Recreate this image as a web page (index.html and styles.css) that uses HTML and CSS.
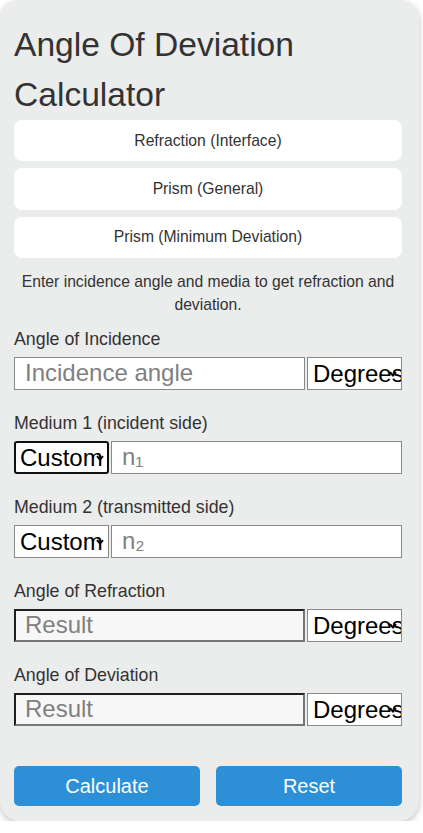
FILE: index.html
```html
<!DOCTYPE html>
<html lang="en">
<head>
<meta charset="utf-8">
<title>Angle Of Deviation Calculator</title>
<link rel="stylesheet" href="styles.css">
</head>
<body>
<div class="card">
  <h1 class="title">Angle Of Deviation Calculator</h1>
  <div class="tabs">
    <button class="tab">Refraction (Interface)</button>
    <button class="tab">Prism (General)</button>
    <button class="tab">Prism (Minimum Deviation)</button>
  </div>
  <p class="desc">Enter incidence angle and media to get refraction and deviation.</p>

  <div class="group">
    <label class="label">Angle of Incidence</label>
    <div class="row">
      <input class="field" type="text" placeholder="Incidence angle">
      <span class="sel unit">
        <select><option>Degrees</option><option>Radians</option></select>
        <svg class="chev" viewBox="0 0 8 6" width="8" height="6"><path d="M1 1.2 L4 4.5 L7 1.2" fill="none" stroke="#000" stroke-width="2"/></svg>
      </span>
    </div>
  </div>

  <div class="group">
    <label class="label">Medium 1 (incident side)</label>
    <div class="row">
      <span class="sel medium focused">
        <select><option>Custom</option><option>Air</option><option>Water</option></select>
        <svg class="chev" viewBox="0 0 8 6" width="8" height="6"><path d="M1 1.2 L4 4.5 L7 1.2" fill="none" stroke="#000" stroke-width="2"/></svg>
      </span>
      <input class="field" type="text" placeholder="n₁">
    </div>
  </div>

  <div class="group">
    <label class="label">Medium 2 (transmitted side)</label>
    <div class="row">
      <span class="sel medium">
        <select><option>Custom</option><option>Air</option><option>Water</option></select>
        <svg class="chev" viewBox="0 0 8 6" width="8" height="6"><path d="M1 1.2 L4 4.5 L7 1.2" fill="none" stroke="#000" stroke-width="2"/></svg>
      </span>
      <input class="field" type="text" placeholder="n₂">
    </div>
  </div>

  <div class="group">
    <label class="label">Angle of Refraction</label>
    <div class="row">
      <input class="field result" type="text" placeholder="Result" readonly>
      <span class="sel unit">
        <select><option>Degrees</option><option>Radians</option></select>
        <svg class="chev" viewBox="0 0 8 6" width="8" height="6"><path d="M1 1.2 L4 4.5 L7 1.2" fill="none" stroke="#000" stroke-width="2"/></svg>
      </span>
    </div>
  </div>

  <div class="group">
    <label class="label">Angle of Deviation</label>
    <div class="row">
      <input class="field result" type="text" placeholder="Result" readonly>
      <span class="sel unit">
        <select><option>Degrees</option><option>Radians</option></select>
        <svg class="chev" viewBox="0 0 8 6" width="8" height="6"><path d="M1 1.2 L4 4.5 L7 1.2" fill="none" stroke="#000" stroke-width="2"/></svg>
      </span>
    </div>
  </div>

  <div class="actions">
    <button class="btn">Calculate</button>
    <button class="btn">Reset</button>
  </div>
</div>
</body>
</html>
```

FILE: styles.css
```css
html, body {
  margin: 0;
  padding: 0;
  background: #ffffff;
}
body {
  font-family: "Liberation Sans", Arial, sans-serif;
  color: #333333;
}
.card {
  width: 419px;
  height: 821px;
  box-sizing: border-box;
  background: #ebecec;
  border-radius: 20px;
  box-shadow: 0 2px 6px rgba(0,0,0,0.25);
  padding: 20px 17px 0 14px;
}
.title {
  margin: 0;
  font-size: 33.6px;
  font-weight: normal;
  line-height: 50px;
  color: #333333;
}
.tabs {
  display: flex;
  flex-direction: column;
  gap: 7px;
}
.tab {
  height: 41.3px;
  border: none;
  border-radius: 8px;
  background: #ffffff;
  color: #333333;
  font-family: "Liberation Sans", Arial, sans-serif;
  font-size: 15.7px;
  padding: 0;
}
.desc {
  margin: 12px 0 0;
  text-align: center;
  font-size: 15.7px;
  line-height: 23.5px;
}
.group {
  display: flex;
  flex-direction: column;
  margin-top: 13px;
}
.group + .group {
  margin-top: 24px;
}
.label {
  font-size: 17.8px;
  line-height: 18px;
  margin-bottom: 9px;
}
.row {
  display: flex;
  gap: 2px;
  height: 33px;
}
.field {
  flex: 1;
  min-width: 0;
  box-sizing: border-box;
  height: 33px;
  margin: 0;
  border: 1px solid #8a8a8a;
  background: #ffffff;
  padding: 0 0 0 10px;
  font-family: "Liberation Sans", Arial, sans-serif;
  font-size: 24px;
  color: #000;
}
.field::placeholder {
  color: #808080;
}
.result {
  border: 2px solid #767676;
  border-top-color: #1f1f1f;
  border-left-color: #1f1f1f;
  border-right-color: #777;
  border-bottom-color: #777;
  background: #f7f7f7;
  padding-left: 9px;
}
.sel {
  position: relative;
  display: block;
  box-sizing: border-box;
  width: 95px;
  height: 33px;
  border: 1px solid #8a8a8a;
  background: #ffffff;
  overflow: hidden;
}
.sel select {
  -webkit-appearance: none;
  appearance: none;
  display: block;
  width: 100%;
  height: 100%;
  margin: 0;
  border: none;
  outline: none;
  background: transparent;
  color: #000;
  font-family: "Liberation Sans", Arial, sans-serif;
  font-size: 24px;
  padding: 0 0 0 5px;
  text-overflow: clip;
}
.chev {
  position: absolute;
  right: 4px;
  top: 13px;
  pointer-events: none;
}
.medium {
  width: 95px;
}
.focused {
  border: 2px solid #101010;
  border-radius: 3px;
}
.focused select {
  padding-left: 4px;
}
.focused .chev {
  right: 3px;
  top: 12px;
}
.actions {
  display: flex;
  gap: 16px;
  margin-top: 40.5px;
}
.btn {
  flex: 1;
  height: 40px;
  border: none;
  border-radius: 5px;
  background: #2d8fd6;
  color: #ffffff;
  font-family: "Liberation Sans", Arial, sans-serif;
  font-size: 20px;
  padding: 0;
}
```
